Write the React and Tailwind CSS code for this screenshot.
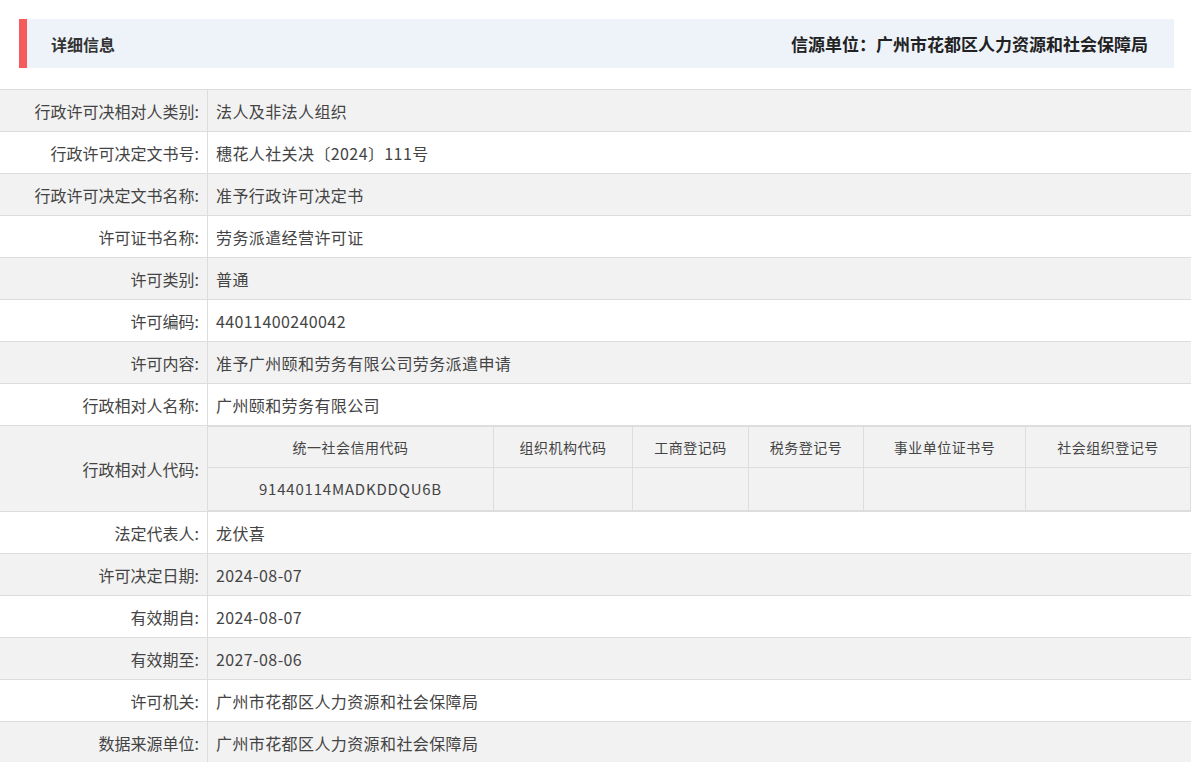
export default function App() {
  const f = { fontFamily: '"Noto Sans CJK SC","Noto Sans",sans-serif' };
  const rows1 = [
    ["行政许可决相对人类别:", "法人及非法人组织"],
    ["行政许可决定文书号:", "穗花人社关决〔2024〕111号"],
    ["行政许可决定文书名称:", "准予行政许可决定书"],
    ["许可证书名称:", "劳务派遣经营许可证"],
    ["许可类别:", "普通"],
    ["许可编码:", "44011400240042"],
    ["许可内容:", "准予广州颐和劳务有限公司劳务派遣申请"],
    ["行政相对人名称:", "广州颐和劳务有限公司"],
  ];
  const rows2 = [
    ["法定代表人:", "龙伏喜"],
    ["许可决定日期:", "2024-08-07"],
    ["有效期自:", "2024-08-07"],
    ["有效期至:", "2027-08-06"],
    ["许可机关:", "广州市花都区人力资源和社会保障局"],
    ["数据来源单位:", "广州市花都区人力资源和社会保障局"],
  ];
  const cols = [
    ["统一社会信用代码", "w-[286px]", "91440114MADKDDQU6B"],
    ["组织机构代码", "w-[139px]", ""],
    ["工商登记码", "w-[116px]", ""],
    ["税务登记号", "w-[115px]", ""],
    ["事业单位证书号", "w-[162px]", ""],
    ["社会组织登记号", "flex-1", ""],
  ];
  const Row = ({ r, i }) => (
    <div className={`flex h-[42px] border-b border-[#dddddd] ${i % 2 === 0 ? "bg-[#f2f2f2]" : "bg-white"}`}>
      <div className="w-[208px] shrink-0 border-r border-[#dddddd] flex items-center justify-end pr-[8px] text-[16px] text-[#444]">{r[0]}</div>
      <div className="flex-1 flex items-center pl-[8px] text-[16px] text-[#444] tracking-[0.4px]">{r[1]}</div>
    </div>
  );
  return (
    <div style={f} className="w-[1191px] h-[762px] overflow-hidden bg-white">
      <div className="pt-[19px] pl-[19px] pr-[17px]">
        <div className="h-[49px] bg-[#eef3fa] border-l-[8px] border-[#f55b5b] flex items-center justify-between pl-[24px] pr-[26px]">
          <span className="text-[16px] font-bold text-[#333]">详细信息</span>
          <span className="text-[17px] font-bold text-[#222]">信源单位：广州市花都区人力资源和社会保障局</span>
        </div>
      </div>
      <div className="mt-[21px] border-t border-[#dddddd]">
        {rows1.map((r, i) => <Row key={i} r={r} i={i} />)}
        <div className="flex h-[86px] border-b border-[#dddddd] bg-[#f2f2f2]">
          <div className="w-[208px] shrink-0 border-r border-[#dddddd] flex items-center justify-end pr-[8px] text-[16px] text-[#444]">行政相对人代码:</div>
          <div className="flex-1 flex border border-[#dddddd] border-l-0 m-0">
            {cols.map((c, i) => (
              <div key={i} className={`${c[1]} flex flex-col ${i < 5 ? "border-r border-[#dddddd]" : ""}`}>
                <div className="h-[41px] flex items-center justify-center border-b border-[#dddddd] text-[14px] text-[#444] tracking-[0.5px]">{c[0]}</div>
                <div className="flex-1 flex items-center justify-center text-[15px] text-[#444] tracking-[0.8px]">{c[2]}</div>
              </div>
            ))}
          </div>
        </div>
        {rows2.map((r, i) => <Row key={i} r={r} i={i + 1} />)}
      </div>
    </div>
  );
}
